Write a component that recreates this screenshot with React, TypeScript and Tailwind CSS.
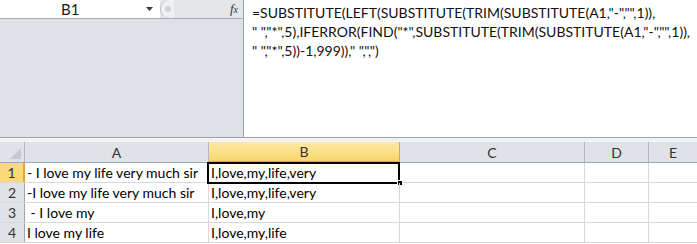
import React from "react";

const font = { fontFamily: "Lato, 'Open Sans', sans-serif" };

const rows = [
  ["- I love my life very much sir", "I,love,my,life,very"],
  ["-I love my life very much sir", "I,love,my,life,very"],
  [" - I love my", "I,love,my"],
  ["I love my life", "I,love,my,life"],
];

export default function App() {
  return (
    <div className="w-[697px] h-[244px] overflow-hidden bg-white text-[14px] text-black" style={font}>
      {/* Formula bar area */}
      <div className="flex h-[138px] border-b border-[#9ea4ab]">
        <div className="w-[244px] flex flex-col border-r border-[#9ea4ab] bg-[#dee1e6]">
          <div className="h-[19px] flex items-center border-b border-[#a7acb3] bg-[#e4e6ea]">
            <div className="w-[160px] h-full bg-white flex items-center relative">
              <span className="absolute left-[61px] top-[0px] text-[15px] leading-[18px] text-[#1a1a1a]">B1</span>
              <svg className="absolute left-[146px] top-[7px]" width="7" height="4" viewBox="0 0 7 4">
                <path d="M0 0h7L3.5 4z" fill="#3c3c3c" />
              </svg>
            </div>
            <div className="w-[14px] h-[18px] rounded-l-full border-l border-[#b8bcc2] bg-[#eef0f2] flex items-center justify-center">
              <div className="w-[6px] h-[6px] rounded-full bg-[#cfd2d6]" />
            </div>
            <div className="flex-1" />
            <span className="mr-[5px] text-[13px] text-[#333]" style={{ fontFamily: "'Liberation Serif', serif" }}>
              <i>f</i><i className="text-[10px]">x</i>
            </span>
          </div>
          <div className="flex-1" />
        </div>
        <div className="flex-1 pl-[8px] pt-[3px] leading-[19px] text-[14px] text-[#111] whitespace-nowrap">
          <div>=SUBSTITUTE(LEFT(SUBSTITUTE(TRIM(SUBSTITUTE(A1,"-","",1)),</div>
          <div>" ","*",5),IFERROR(FIND("*",SUBSTITUTE(TRIM(SUBSTITUTE(A1,"-","",1)),</div>
          <div>" ","*",5))-1,999)),"&nbsp;",",")</div>
        </div>
      </div>
      <div className="h-[4px] bg-[#f3f3f3]" />

      {/* Header row */}
      <div className="flex h-[21px] border-b border-[#9ea6b0] bg-[#dfe2e7] text-[#333]">
        <div className="w-[25px] border-r border-[#b4b9c0] relative">
          <svg className="absolute right-[3px] bottom-[3px]" width="11" height="11" viewBox="0 0 11 11">
            <path d="M11 0V11H0z" fill="#c5c9ce" />
          </svg>
        </div>
        <div className="w-[184px] border-r border-[#b4b9c0] flex items-center justify-center">A</div>
        <div className="w-[191px] border-r border-[#e2a43c] flex items-center justify-center bg-gradient-to-b from-[#fde9a6] to-[#f9d66c] border-b-2 border-b-[#e2a43c] -mb-[1px]">B</div>
        <div className="w-[185px] border-r border-[#b4b9c0] flex items-center justify-center">C</div>
        <div className="w-[64px] border-r border-[#b4b9c0] flex items-center justify-center">D</div>
        <div className="flex-1 flex items-center justify-center">E</div>
      </div>

      {rows.map((r, i) => (
        <div key={i} className="flex h-[20px] border-b border-[#d8d8d8]">
          <div
            className={
              i === 0
                ? "w-[25px] border-r-2 border-[#e2a43c] bg-[#fad977] text-[#333] flex items-center justify-center"
                : "w-[25px] border-r border-[#9ea6b0] bg-[#dfe2e7] text-[#333] flex items-center justify-center"
            }
          >
            {i + 1}
          </div>
          <div className="w-[184px] border-r border-[#d8d8d8] pl-[2px] leading-[19px] whitespace-pre overflow-hidden">{r[0]}</div>
          <div className="w-[191px] border-r border-[#d8d8d8] pl-[2px] leading-[19px] relative whitespace-pre">
            {r[1]}
            {i === 0 && (
              <>
                <div className="absolute -left-[2px] -top-[1px] -right-[1px] -bottom-[2px] border-2 border-black pointer-events-none" />
                <div className="absolute -right-[4px] -bottom-[4px] w-[6px] h-[6px] bg-black border border-white" />
              </>
            )}
          </div>
          <div className="w-[185px] border-r border-[#d8d8d8]" />
          <div className="w-[64px] border-r border-[#d8d8d8]" />
          <div className="flex-1" />
        </div>
      ))}
    </div>
  );
}
